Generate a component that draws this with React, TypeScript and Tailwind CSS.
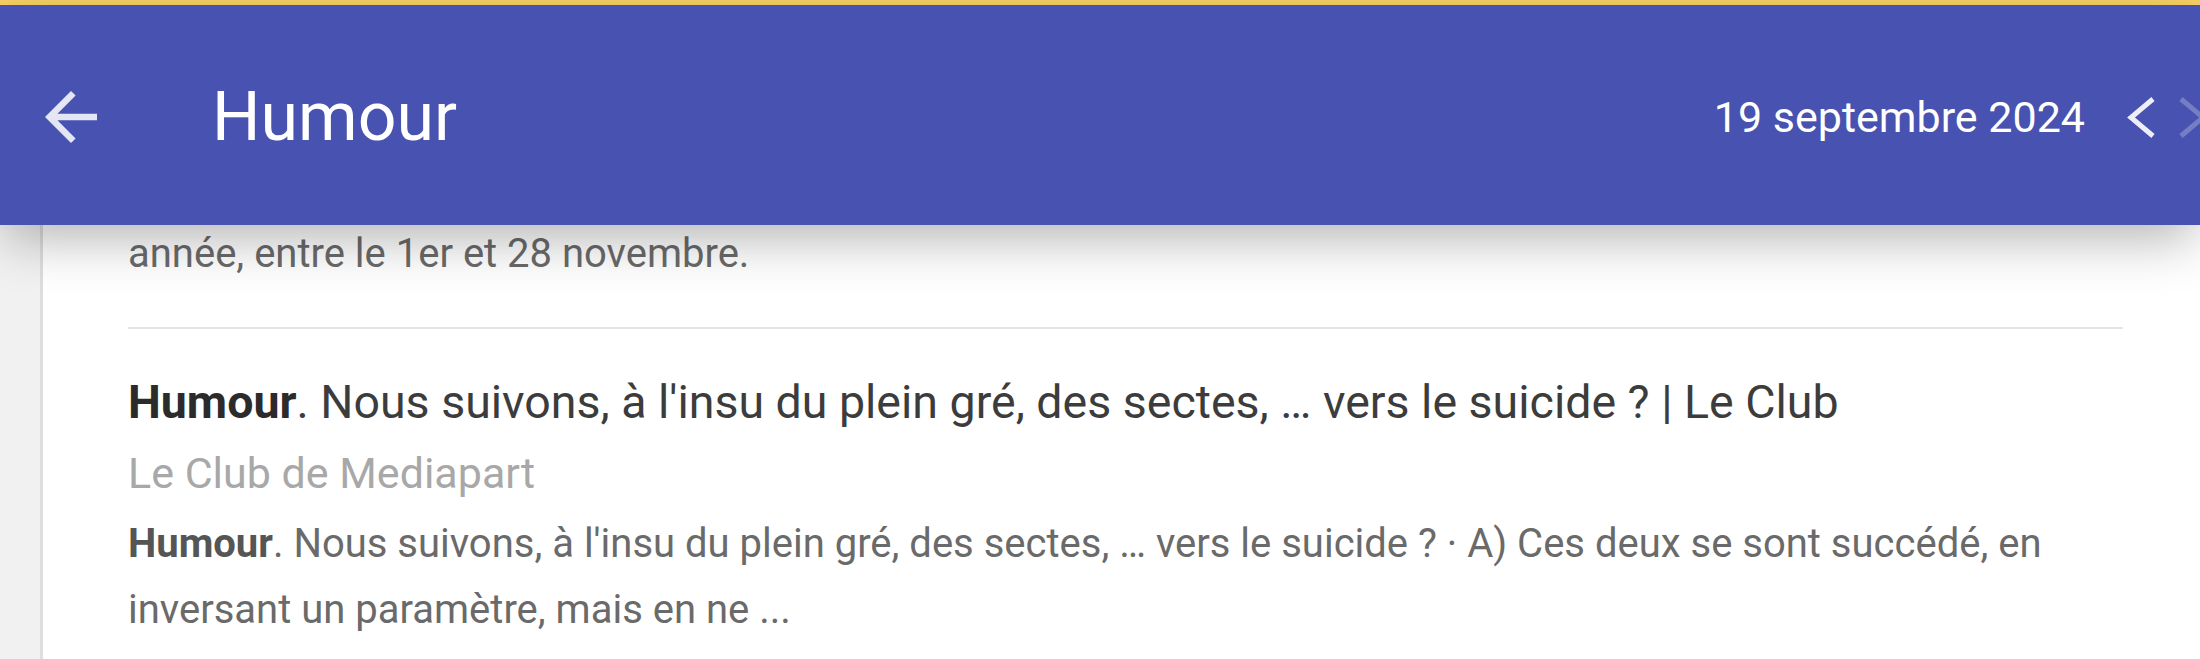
import React from 'react';

function BackArrow() {
  return (
    <svg viewBox="0 0 24 24" className="w-[78px] h-[78px] shrink-0" fill="#e4e6f4">
      <path d="M20 11H7.83l5.59-5.59L12 4l-8 8 8 8 1.41-1.41L7.83 13H20v-2z" />
    </svg>
  );
}

function Chevron({ dir, faded }: { dir: 'left' | 'right'; faded?: boolean }) {
  const points = dir === 'left' ? '31,12 9,30.5 31,49' : '9,12 31,30.5 9,49';
  return (
    <svg viewBox="0 0 40 60" className={`w-[40px] h-[60px] shrink-0 ${faded ? 'opacity-25' : 'opacity-90'}`}>
      <polyline points={points} fill="none" stroke="#ffffff" strokeWidth="5" />
    </svg>
  );
}

export default function App() {
  return (
    <div className="h-[659px] w-[2200px] overflow-hidden bg-white font-['Roboto',sans-serif] flex flex-col">
      <div className="h-[5px] bg-[#f7d063] shrink-0" />

      {/* Top bar */}
      <header className="relative z-10 h-[220px] shrink-0 bg-[#4752b1] flex items-center pl-[32px] pt-[4px] shadow-[0_18px_50px_-5px_rgba(0,0,0,0.3)]">
        <BackArrow />
        <h1 className="ml-[102px] text-[68px] leading-none text-white font-normal">Humour</h1>
        <div className="ml-auto -mr-[12px] flex items-center">
          <span className="text-[43px] leading-none text-white">19 septembre 2024</span>
          <div className="ml-[37px] flex items-center gap-[10px]">
            <Chevron dir="left" />
            <Chevron dir="right" faded />
          </div>
        </div>
      </header>

      {/* Results */}
      <div className="flex flex-1 min-h-0">
        <div className="w-[40px] shrink-0 bg-[#f1f1f1]" />
        <main className="flex-1 bg-white border-l-[3px] border-[#dedede] pl-[85px] pr-[77px]">
          <p className="-mt-[4px] text-[40px] leading-[66px] text-[#6a6a6a]">
            année, entre le 1er et 28 novembre.
          </p>
          <hr className="mt-[40px] border-0 h-[2px] bg-[#e4e4e4]" />

          <article className="pt-[45px]">
            <h2 className="text-[46.5px] leading-[56px] text-[#3c3c3c]">
              <b className="font-bold text-[#2b2b2b]">Humour</b>. Nous suivons, à l'insu du plein gré, des sectes, … vers le suicide ? | Le Club
            </h2>
            <div className="mt-[15px] text-[43px] leading-[56px] text-[#a8a8a8]">Le Club de Mediapart</div>
            <p className="mt-[10px] text-[40px] leading-[66px] text-[#6a6a6a]">
              <b className="font-bold text-[#555555]">Humour</b>. Nous suivons, à l'insu du plein gré, des sectes, … vers le suicide ? · A) Ces deux se sont succédé, en inversant un paramètre, mais en ne ...
            </p>
          </article>
        </main>
      </div>
    </div>
  );
}
